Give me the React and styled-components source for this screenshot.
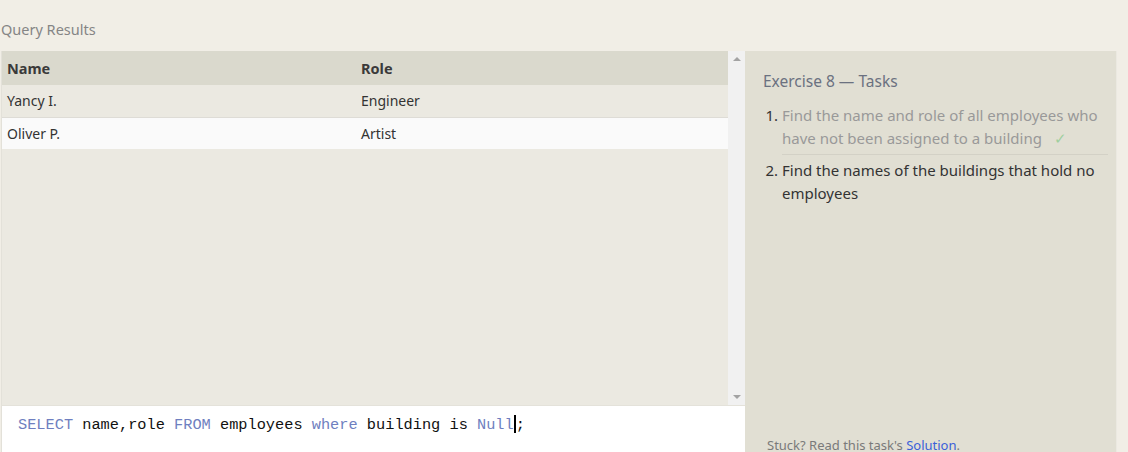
import React from 'react';
import styled, { createGlobalStyle } from 'styled-components';

const GlobalStyle = createGlobalStyle`
  html, body {
    margin: 0;
    padding: 0;
    background: #f1eee6;
    font-family: "Noto Sans", "Open Sans", sans-serif;
  }
`;

const Page = styled.div`
  width: 1128px;
  height: 452px;
  overflow: hidden;
  padding: 0 11px 0 2px;
  box-sizing: border-box;
`;

const SectionTitle = styled.div`
  height: 51px;
  box-sizing: border-box;
  padding-top: 19px;
  margin-left: -1px;
  font-size: 14.5px;
  color: #858585;
`;

const Main = styled.div`
  display: grid;
  grid-template-columns: 743px 1fr;
  height: 401px;
`;

const LeftColumn = styled.div`
  display: flex;
  flex-direction: column;
  border-left: 1px solid #e3e1d9;
  margin-left: -1px;
`;

const ResultsArea = styled.div`
  flex: 1;
  display: flex;
  background: #ebe9e1;
`;

const TableWrap = styled.div`
  flex: 1;
`;

const Table = styled.table`
  width: 100%;
  border-collapse: collapse;
  font-size: 14px;
  color: #333;
`;

const HeadCell = styled.th`
  text-align: left;
  font-weight: 700;
  font-size: 14.5px;
  height: 34px;
  padding: 0 5px;
  background: #dad9cd;
  color: #3a3a3a;
  width: ${p => p.$width || 'auto'};
`;

const Row = styled.tr`
  background: ${p => (p.$alt ? '#fafafa' : '#ebe9e1')};
  border-top: ${p => (p.$alt ? '1px solid #dedcd6' : 'none')};
`;

const Cell = styled.td`
  height: 32px;
  padding: 0 5px;
  box-sizing: border-box;
`;

const Scrollbar = styled.div`
  width: 17px;
  background: #f1f1f1;
  display: flex;
  flex-direction: column;
  justify-content: space-between;
  align-items: center;
  padding: 6px 0 6px;
  box-sizing: border-box;
`;

const Arrow = styled.div`
  width: 0;
  height: 0;
  border-left: 4px solid transparent;
  border-right: 4px solid transparent;
  ${p => (p.$down ? 'border-top: 4px solid #a3a3a3;' : 'border-bottom: 4px solid #a3a3a3;')}
`;

const Editor = styled.div`
  height: 47px;
  background: #ffffff;
  border-top: 1px solid #e4e2da;
  box-sizing: border-box;
  padding: 9px 0 0 16px;
  font-family: "Liberation Mono", "DejaVu Sans Mono", monospace;
  font-size: 15.3px;
  color: #111;
  white-space: pre;
`;

const Keyword = styled.span`
  color: #6f7fc0;
`;

const Caret = styled.span`
  display: inline-block;
  width: 2px;
  height: 18px;
  background: #000;
  vertical-align: -4px;
`;

const TaskPanel = styled.div`
  background: #e1dfd3;
  border-right: 1px solid #ebe9e1;
  display: flex;
  flex-direction: column;
  padding: 19px 8px 0 18px;
  box-sizing: border-box;
`;

const TaskTitle = styled.div`
  font-size: 15.5px;
  color: #6b7180;
  margin-bottom: 12px;
`;

const TaskList = styled.ol`
  margin: 0;
  padding: 0 0 0 19px;
  font-size: 15px;
  line-height: 23px;
  flex: 1;
`;

const Task = styled.li`
  color: ${p => (p.$done ? '#999' : '#333')};
  padding-bottom: 4px;
  margin-bottom: 4px;
  border-bottom: ${p => (p.$done ? '1px solid #d3d1c6' : 'none')};
  &::marker {
    color: #333;
  }
`;

const Check = styled.span`
  color: #9fcf9f;
  margin-left: 12px;
`;

const Stuck = styled.div`
  font-size: 13px;
  color: #7a7a7a;
  padding: 0 0 0 4px;
  height: 20px;
  margin-bottom: -4px;
`;

const Link = styled.a`
  color: #3a5fd9;
  text-decoration: none;
`;

const rows = [
  { name: 'Yancy I.', role: 'Engineer' },
  { name: 'Oliver P.', role: 'Artist' },
];

export default function App() {
  return (
    <Page>
      <GlobalStyle />
      <SectionTitle>Query Results</SectionTitle>
      <Main>
        <LeftColumn>
          <ResultsArea>
            <TableWrap>
              <Table>
                <thead>
                  <tr>
                    <HeadCell $width="344px">Name</HeadCell>
                    <HeadCell>Role</HeadCell>
                  </tr>
                </thead>
                <tbody>
                  {rows.map((r, i) => (
                    <Row key={r.name} $alt={i % 2 === 1}>
                      <Cell>{r.name}</Cell>
                      <Cell>{r.role}</Cell>
                    </Row>
                  ))}
                </tbody>
              </Table>
            </TableWrap>
            <Scrollbar>
              <Arrow />
              <Arrow $down />
            </Scrollbar>
          </ResultsArea>
          <Editor>
            <Keyword>SELECT</Keyword> name,role <Keyword>FROM</Keyword> employees <Keyword>where</Keyword> building is <Keyword>Null</Keyword><Caret />;
          </Editor>
        </LeftColumn>
        <TaskPanel>
          <TaskTitle>Exercise 8 — Tasks</TaskTitle>
          <TaskList>
            <Task $done>
              Find the name and role of all employees who have not been assigned to a building
              <Check>✓</Check>
            </Task>
            <Task>Find the names of the buildings that hold no employees</Task>
          </TaskList>
          <Stuck>
            Stuck? Read this task's <Link href="#">Solution</Link>.
          </Stuck>
        </TaskPanel>
      </Main>
    </Page>
  );
}
